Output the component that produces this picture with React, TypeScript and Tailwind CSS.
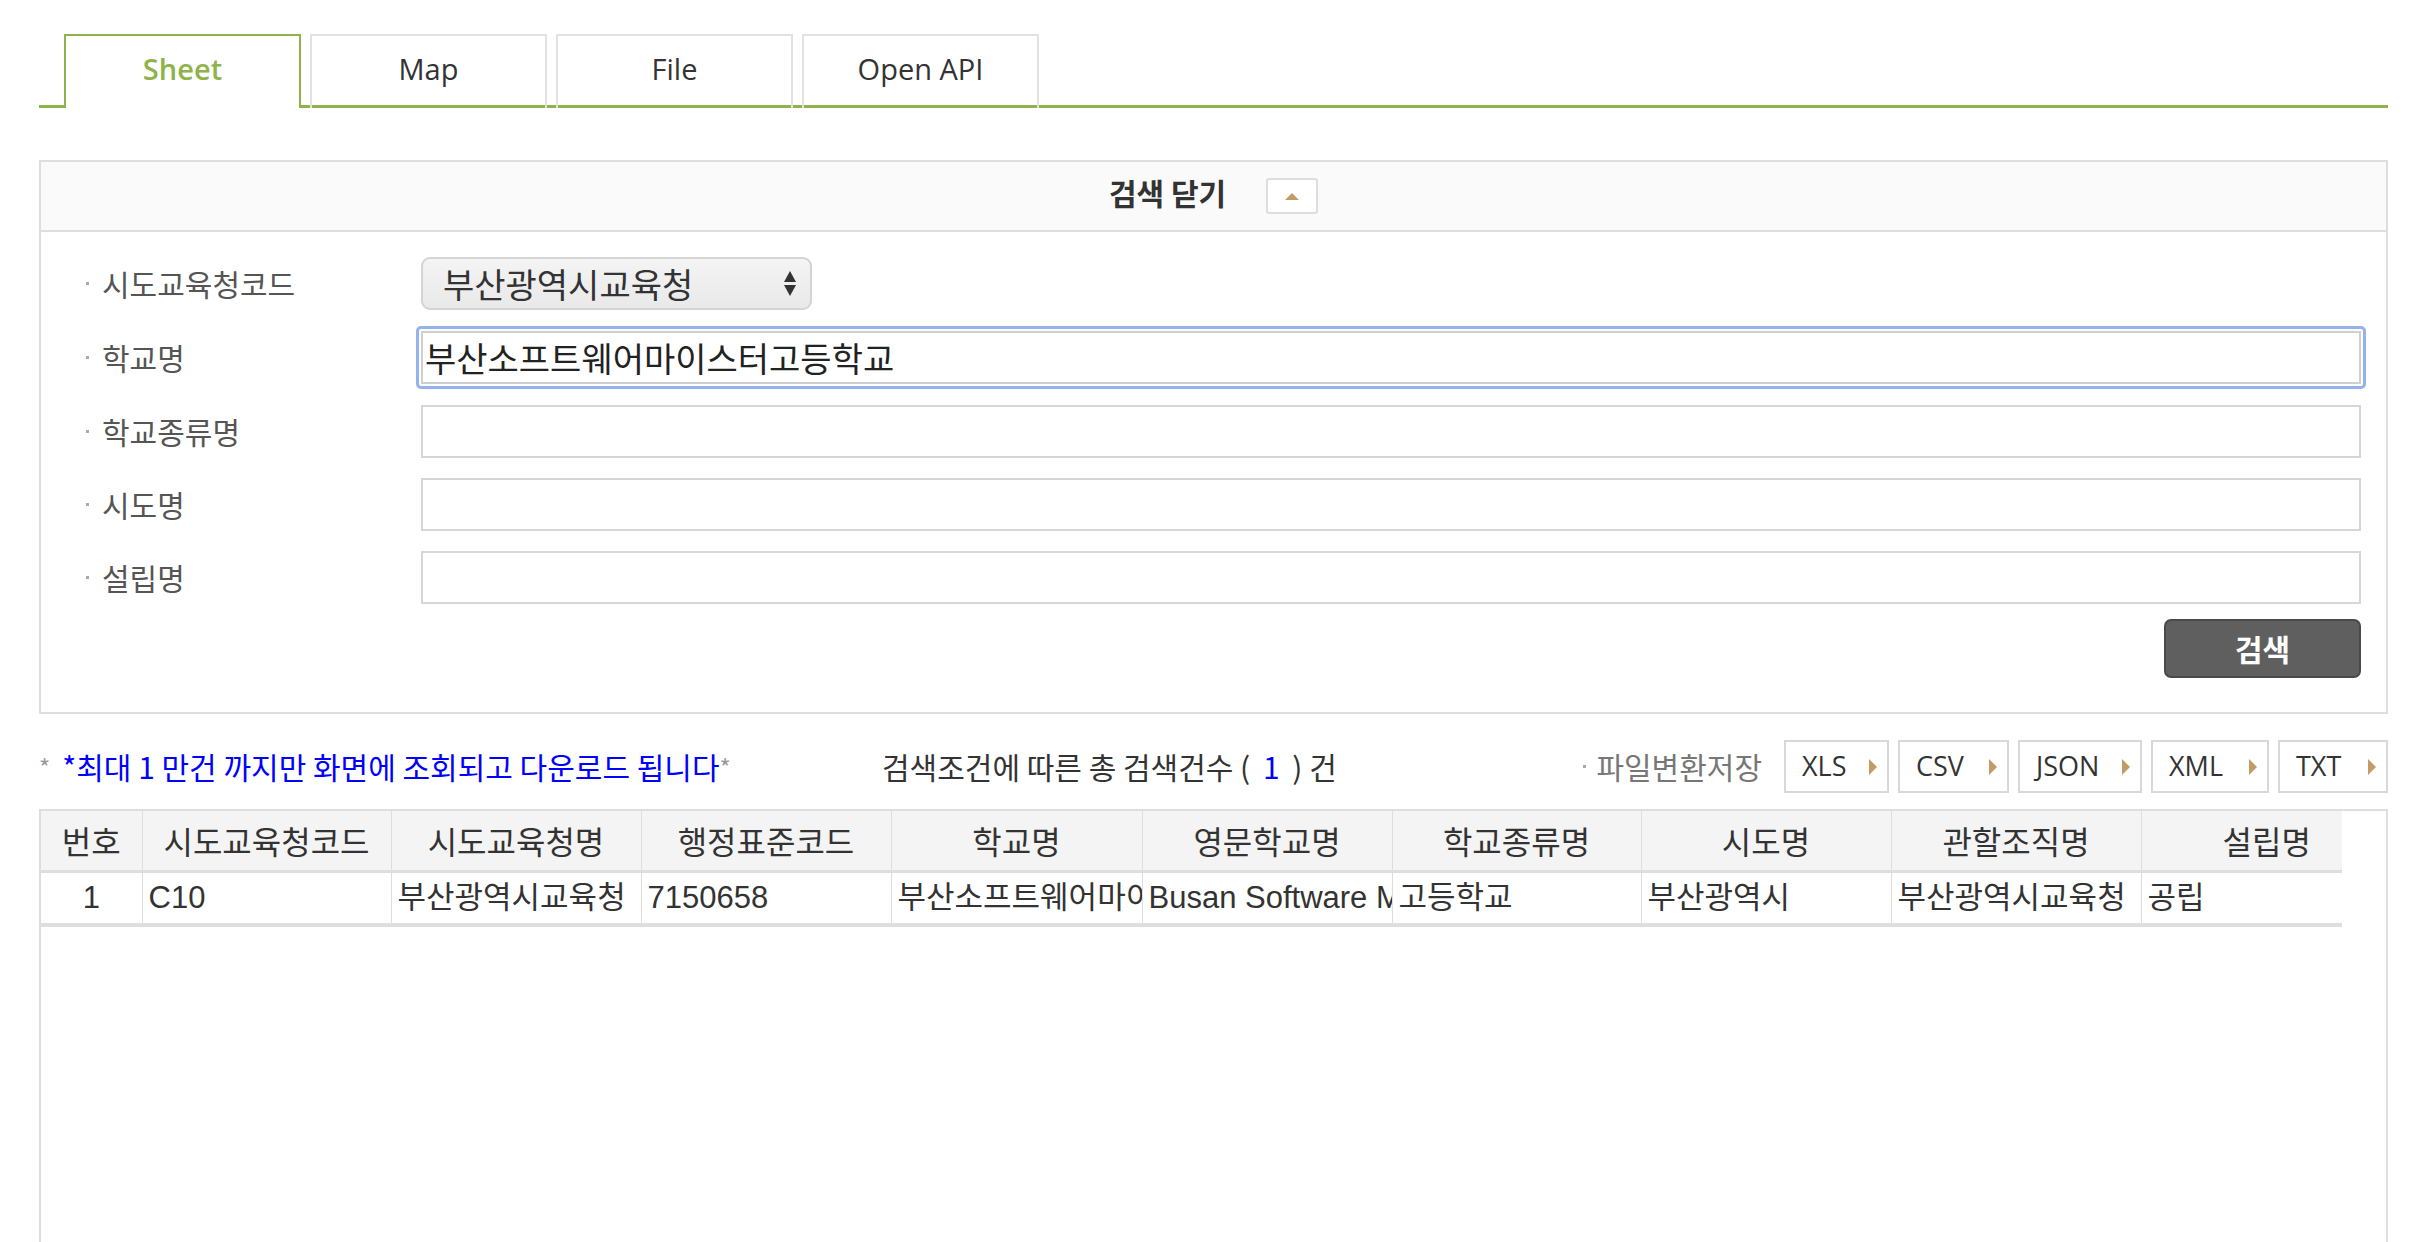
import React from 'react';

const kr = { fontFamily: '"Noto Sans CJK KR", "Noto Sans", sans-serif' };
const tbl = { fontFamily: '"Liberation Sans", "Noto Sans CJK KR", sans-serif' };

const tabs = ['Sheet', 'Map', 'File', 'Open API'];

const fields = [
  { label: '시도교육청코드', kind: 'select', value: '부산광역시교육청' },
  { label: '학교명', kind: 'focus', value: '부산소프트웨어마이스터고등학교' },
  { label: '학교종류명', kind: 'input', value: '' },
  { label: '시도명', kind: 'input', value: '' },
  { label: '설립명', kind: 'input', value: '' },
];

const columns = [
  { name: '번호', w: 101 },
  { name: '시도교육청코드', w: 249 },
  { name: '시도교육청명', w: 250 },
  { name: '행정표준코드', w: 250 },
  { name: '학교명', w: 251 },
  { name: '영문학교명', w: 250 },
  { name: '학교종류명', w: 249 },
  { name: '시도명', w: 250 },
  { name: '관할조직명', w: 250 },
  { name: '설립명', w: 201 },
];

const row = [
  '1',
  'C10',
  '부산광역시교육청',
  '7150658',
  '부산소프트웨어마이스터고등학교',
  'Busan Software Meister High School',
  '고등학교',
  '부산광역시',
  '부산광역시교육청',
  '공립',
];

const formats = [
  { name: 'XLS', w: 105 },
  { name: 'CSV', w: 111 },
  { name: 'JSON', w: 124 },
  { name: 'XML', w: 118 },
  { name: 'TXT', w: 110 },
];

function Field({ kind, value }: { kind: string; value: string }) {
  if (kind === 'select') {
    return (
      <div className="flex h-[53px] w-[391px] items-center justify-between rounded-[9px] border-2 border-[#d4d4d4] bg-gradient-to-b from-[#f4f4f4] to-[#e9e9e9] pl-[20px] pr-[14px] text-[34px] text-[#333]">
        <span>{value}</span>
        <span className="flex flex-col items-center gap-[3px]">
          <span className="h-0 w-0 border-x-[6px] border-b-[11px] border-x-transparent border-b-[#333]" />
          <span className="h-0 w-0 border-x-[6px] border-t-[11px] border-x-transparent border-t-[#333]" />
        </span>
      </div>
    );
  }
  if (kind === 'focus') {
    return (
      <div className="-mx-[5px] -my-[4px] rounded-[5px] border-[3px] border-[#94b2ee] p-[2px]">
        <div className="flex h-[53px] items-center border-2 border-[#cfcfcf] pl-[2px] text-[34px] text-[#222]">
          {value}
        </div>
      </div>
    );
  }
  return <div className="h-[53px] border-2 border-[#d6d6d6] bg-white" />;
}

export default function App() {
  return (
    <div className="min-h-screen bg-white pt-[34px] pl-[39px] pr-[44px]" style={kr}>
      {/* tabs */}
      <div className="flex gap-[9px] border-b-[3px] border-[#8eb34a] pl-[25px]">
        {tabs.map((t, i) => (
          <div
            key={t}
            className={`-mb-[3px] flex h-[74px] w-[237px] items-center justify-center border-2 border-b-0 pb-[6px] text-[29px] ${
              i === 0
                ? 'border-[#8eb34a] bg-white font-semibold text-[#8eb34a]'
                : 'border-[#e2e2e2] text-[#333]'
            }`}
            style={{ fontFamily: '"Open Sans", "Noto Sans", sans-serif' }}
          >
            {t}
          </div>
        ))}
      </div>

      {/* search panel */}
      <div className="mt-[52px] border-2 border-[#dedede]">
        <div className="flex h-[70px] items-center justify-center gap-[40px] border-b-2 border-[#dedede] bg-[#fafafa]">
          <span className="-mt-[7px] text-[30px] font-bold text-[#333]">검색 닫기</span>
          <span className="flex h-[36px] w-[52px] items-center justify-center rounded-[3px] border-2 border-[#dedede] bg-white">
            <span className="h-0 w-0 border-x-[7px] border-b-[7px] border-x-transparent border-b-[#c49a66]" />
          </span>
        </div>

        <div className="px-[25px] pt-[25px] pb-[34px]">
          <div className="flex flex-col gap-[20px]">
            {fields.map((f) => (
              <div key={f.label} className="flex items-center">
                <div className="flex w-[355px] shrink-0 items-center pl-[20px] text-[30px] text-[#555]">
                  <span className="mr-[13px] h-[3px] w-[3px] bg-[#aaa]" />
                  {f.label}
                </div>
                <div className="flex-1">
                  <Field kind={f.kind} value={f.value} />
                </div>
              </div>
            ))}
          </div>
          <div className="mt-[15px] flex justify-end">
            <button className="h-[59px] w-[197px] rounded-[7px] border-2 border-[#4a4a4a] bg-[#5f5f5f] text-[30px] font-bold text-white">
              검색
            </button>
          </div>
        </div>
      </div>

      {/* info row */}
      <div className="mt-[26px] flex h-[53px] items-center">
        <div className="flex w-[843px] shrink-0 items-center text-[30px]">
          <span className="mr-[12px] text-[24px] text-[#999]">*</span>
          <span className="text-[#0000ff]">*최대 1 만건 까지만 화면에 조회되고 다운로드 됩니다</span>
          <span className="text-[24px] text-[#999]">*</span>
        </div>
        <div className="flex-1 text-[30px] text-[#333]">
          검색조건에 따른 총 검색건수 ( <span className="mx-[6px] text-[#0000ff]">1</span> ) 건
        </div>
        <div className="flex items-center">
          <span className="mr-[22px] flex items-center text-[30px] text-[#777]">
            <span className="mr-[10px] h-[3px] w-[3px] bg-[#aaa]" />
            파일변환저장
          </span>
          <div className="flex gap-[9px]">
            {formats.map((f) => (
              <div
                key={f.name}
                className="flex h-[53px] items-center justify-between border-2 border-[#d8d8d8] pl-[16px] pr-[10px] text-[27px] text-[#333]"
                style={{ width: f.w, fontFamily: '"Open Sans", "Noto Sans", sans-serif' }}
              >
                {f.name}
                <span className="h-0 w-0 border-y-[8px] border-l-[8px] border-y-transparent border-l-[#c49a66]" />
              </div>
            ))}
          </div>
        </div>
      </div>

      {/* table */}
      <div className="mt-[16px] h-[440px] border-x-2 border-t-2 border-[#dedede]">
        <table className="table-fixed border-collapse text-[31px]" style={{ ...tbl, width: 2301 }}>
          <colgroup>
            {columns.map((c) => (
              <col key={c.name} style={{ width: c.w }} />
            ))}
          </colgroup>
          <thead>
            <tr className="h-[60px] bg-[#f4f4f4]">
              {columns.map((c, i) => (
                <th
                  key={c.name}
                  className={`overflow-hidden whitespace-nowrap border-l border-[#dedede] text-[32px] font-normal text-[#333] first:border-l-0 ${
                    i === columns.length - 1 ? 'pl-[50px]' : ''
                  }`}
                  style={kr}
                >
                  {c.name}
                </th>
              ))}
            </tr>
          </thead>
          <tbody>
            <tr className="h-[54px] border-t-[3px] border-b-[4px] border-[#dedede]">
              {row.map((v, i) => (
                <td
                  key={i}
                  className={`overflow-hidden whitespace-nowrap border-l border-[#dedede] text-[#333] first:border-l-0 ${
                    i === 0 ? 'text-center' : 'pl-[6px]'
                  }`}
                >
                  {v}
                </td>
              ))}
            </tr>
          </tbody>
        </table>
      </div>
    </div>
  );
}
